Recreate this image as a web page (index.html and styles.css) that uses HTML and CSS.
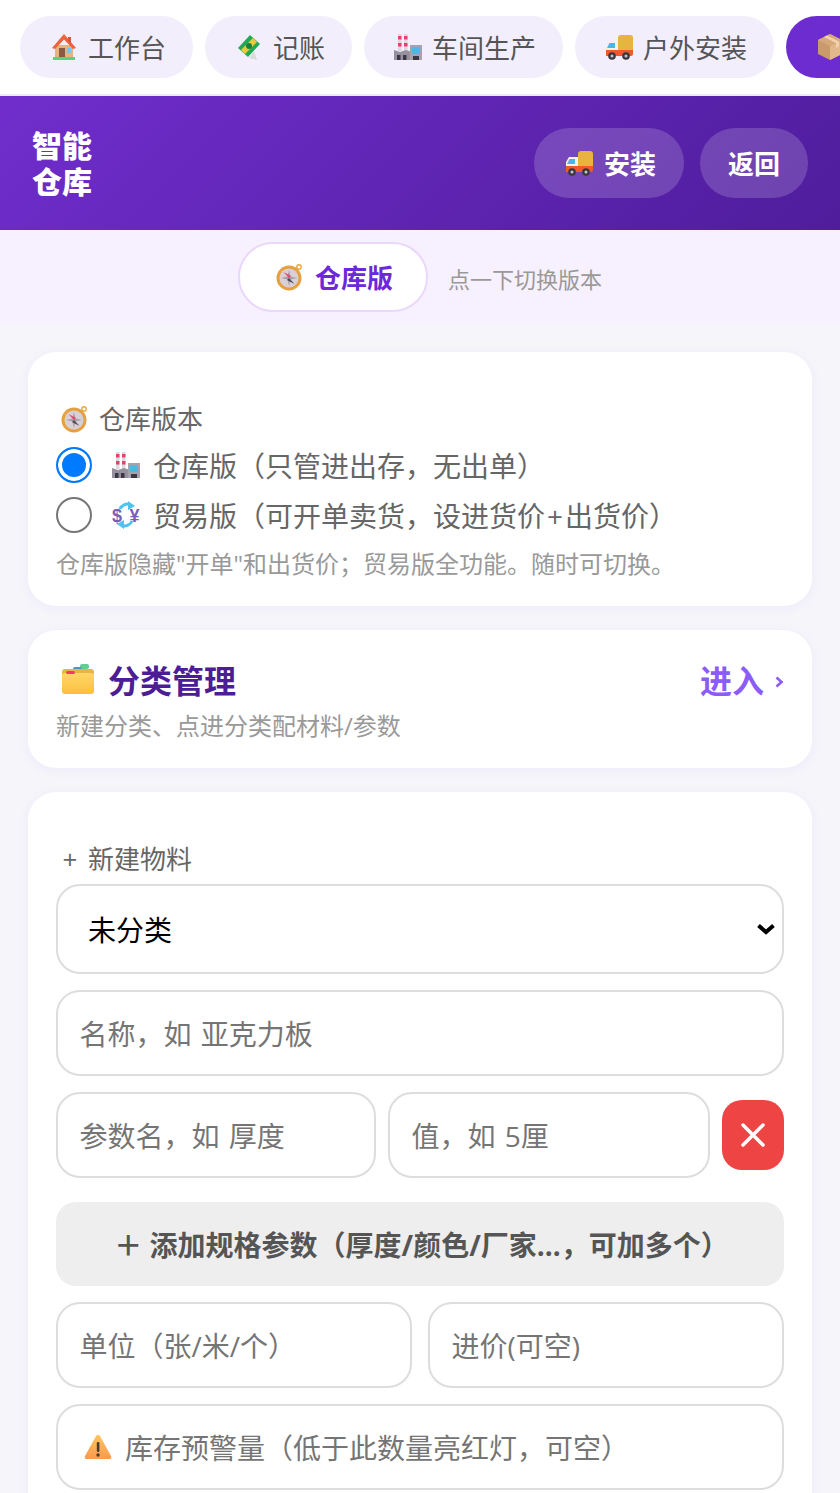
FILE: index.html
```html
<!DOCTYPE html>
<html lang="zh-CN">
<head>
    <meta charset="UTF-8">
    <meta name="viewport" content="width=device-width, initial-scale=1.0">
    <title>智能仓库</title>
    <link rel="stylesheet" href="styles.css">
</head>
<body>
<svg class="defs" width="0" height="0">
    <defs>
        <linearGradient id="g-folder" x1="0" y1="0" x2="0" y2="1">
            <stop offset="0" stop-color="#ffd766"/>
            <stop offset="1" stop-color="#fbbf3f"/>
        </linearGradient>
        <linearGradient id="g-warn" x1="0" y1="0" x2="0" y2="1">
            <stop offset="0" stop-color="#ffc55e"/>
            <stop offset="1" stop-color="#f99a4e"/>
        </linearGradient>
    </defs>
    <symbol id="i-house" viewBox="0 0 28 28">
        <rect x="5" y="12" width="18" height="13" fill="#e8b27e"/>
        <path d="M14 1 L2 15 L5 16 L14 6.500 L23 16 L26 15 Z" fill="#f0623c"/>
        <path d="M18 4h3v7l-3-3z" fill="#d9563a"/>
        <rect x="9" y="15" width="6" height="10" fill="#8a5a44"/>
        <rect x="17" y="15" width="4" height="5" fill="#7fc4e8"/>
        <rect x="3" y="24" width="22" height="3" fill="#5ed07f"/>
    </symbol>
    <symbol id="i-money" viewBox="0 0 28 28">
        <path d="M14 25l8 2-3-9z" fill="#d8dcd8"/>
        <path d="M15 2 L25 11 L13 24 L3 15 Z" fill="#22a857"/>
        <path d="M18 5 L22 9 L10 21 L6 17 Z" fill="#f0c93a"/>
        <circle cx="14" cy="13" r="3" fill="#15803d"/>
    </symbol>
    <symbol id="i-factory" viewBox="0 0 28 28">
        <path d="M4 1h3.500v17H4zM10 1h3.500v17H10z" fill="#dcd8e0"/>
        <path d="M4 3h3.500v3.500H4zM10 3h3.500v3.500H10zM4 10h3.500v3.500H4zM10 10h3.500v3.500H10z" fill="#e83f6f"/>
        <path d="M0 27V17l6 2 6-2 6 2v8z" fill="#96919e"/>
        <rect x="16" y="12" width="12" height="15" fill="#a6a3ad"/>
        <path d="M18 14h8v7h-8z" fill="#4fb7e6"/>
        <path d="M3 22h3.500v5H3zM9 22h3.500v5H9zM19 23h6v4h-6z" fill="#3b3744"/>
    </symbol>
    <symbol id="i-truck" viewBox="0 0 28 28">
        <path d="M13 5a3 3 0 0 1 3-3h9a3 3 0 0 1 3 3v15H13z" fill="#e8b33e"/>
        <path d="M4 8h9v11H1v-6z" fill="#f4f1ec"/>
        <path d="M4.500 10H10v5H2z" fill="#45b7e8"/>
        <path d="M1 17h27v4a2 2 0 0 1-2 2H1z" fill="#f0582f"/>
        <circle cx="7" cy="23" r="3.800" fill="#3a3540"/><circle cx="7" cy="23" r="1.500" fill="#c8c6cc"/>
        <circle cx="21" cy="23" r="3.800" fill="#3a3540"/><circle cx="21" cy="23" r="1.500" fill="#c8c6cc"/>
    </symbol>
    <symbol id="i-box" viewBox="0 0 28 28">
        <path d="M14 1 L26 7 V21 L14 27 L2 21 V7 Z" fill="#c99a6b"/>
        <path d="M14 13 L26 7 V21 L14 27 Z" fill="#e2b88a"/>
        <path d="M14 1 L26 7 L14 13 L2 7 Z" fill="#d7a878"/>
        <path d="M8 4 L20 10 V15 L23 13.500 V8.500 L11 2.500 Z" fill="#f0d3ae"/>
    </symbol>
    <symbol id="i-compass" viewBox="0 0 28 28">
        <circle cx="23" cy="4" r="2.200" fill="none" stroke="#e7a93c" stroke-width="1.400"/>
        <circle cx="13" cy="15" r="12.500" fill="#e6a03f"/>
        <circle cx="13" cy="15" r="9.500" fill="#d9d0d6"/>
        <path d="M13 7 L14.500 13.500 L21 15 L14.500 16.500 L13 23 L11.500 16.500 L5 15 L11.500 13.500 Z" fill="#a8a0a8"/>
        <path d="M13 15 L7.500 9 L15 13z" fill="#e8436e"/>
        <path d="M13 15 L18.500 21 L11 17z" fill="#4d4852"/>
    </symbol>
    <symbol id="i-folder" viewBox="0 0 34 30">
        <rect x="19" y="0" width="9" height="5" rx="2" fill="#5fd08c"/>
        <rect x="12" y="3" width="9" height="5" rx="2" fill="#4f94c4"/>
        <rect x="1" y="5" width="32" height="24" rx="3" fill="#e5b645"/>
        <rect x="1" y="9" width="32" height="21" rx="3" fill="url(#g-folder)"/>
        <rect x="5" y="7" width="9" height="3" rx="1.500" fill="#f0405f"/>
    </symbol>
    <symbol id="i-warn" viewBox="0 0 28 26">
        <path d="M14 1 a2 2 0 0 1 2 1 L27 22 a2 2 0 0 1-2 3 H3 a2 2 0 0 1-2-3 L12 2 a2 2 0 0 1 2-1z" fill="url(#g-warn)"/>
        <rect x="12.800" y="8" width="2.600" height="10" rx="1.200" fill="#4a3b35"/>
        <circle cx="14" cy="21" r="1.700" fill="#4a3b35"/>
    </symbol>
</svg>

<nav class="topnav">
    <a class="tab"><svg class="emoji"><use href="#i-house"/></svg>工作台</a>
    <a class="tab"><svg class="emoji"><use href="#i-money"/></svg>记账</a>
    <a class="tab"><svg class="emoji"><use href="#i-factory"/></svg>车间生产</a>
    <a class="tab"><svg class="emoji"><use href="#i-truck"/></svg>户外安装</a>
    <a class="tab active"><svg class="emoji"><use href="#i-box"/></svg>智能仓库</a>
</nav>

<header class="header">
    <h1 class="title">智能<br>仓库</h1>
    <div class="header-btns">
        <button class="head-btn"><svg class="emoji"><use href="#i-truck"/></svg>安装</button>
        <button class="head-btn">返回</button>
    </div>
</header>

<div class="version-bar">
    <button class="version-pill"><svg class="emoji"><use href="#i-compass"/></svg>仓库版</button>
    <span class="version-hint">点一下切换版本</span>
</div>

<main class="content">
    <section class="card version-card">
        <div class="card-label"><svg class="emoji"><use href="#i-compass"/></svg>仓库版本</div>
        <label class="radio-row">
            <input type="radio" name="ver" checked>
            <svg class="emoji"><use href="#i-factory"/></svg>
            <span>仓库版（只管进出存，无出单）</span>
        </label>
        <label class="radio-row">
            <input type="radio" name="ver">
            <svg class="emoji" viewBox="0 0 28 28">
                <path d="M8 8 A8 8 0 0 1 18 3.500" fill="none" stroke="#4fc3f0" stroke-width="3"/>
                <path d="M16 0 L23 5 L16 9z" fill="#4fc3f0"/>
                <path d="M20 20 A8 8 0 0 1 10 24.500" fill="none" stroke="#4fc3f0" stroke-width="3"/>
                <path d="M12 28 L5 23 L12 19z" fill="#4fc3f0"/>
                <text x="0" y="20.500" class="cur">$</text>
                <text x="17.500" y="20.500" class="cur">¥</text>
            </svg>
            <span>贸易版（可开单卖货，设进货价<span class="wide">+</span>出货价）</span>
        </label>
        <p class="note">仓库版隐藏"开单"和出货价；贸易版全功能。随时可切换。</p>
    </section>

    <section class="card cat-card">
        <div class="cat-top">
            <h2 class="cat-title"><svg class="emoji folder"><use href="#i-folder"/></svg>分类管理</h2>
            <span class="cat-link">进入
                <svg class="cat-arrow" width="9" height="12" viewBox="0 0 9 12"><path d="M1.500 1.500 L6.500 6 L1.500 10.500" fill="none" stroke="#8b5cf6" stroke-width="2.600"/></svg>
            </span>
        </div>
        <p class="note">新建分类、点进分类配材料/参数</p>
    </section>

    <section class="card form-card">
        <div class="card-label"><span class="plus">+</span>新建物料</div>
        <select class="field select">
            <option>未分类</option>
        </select>
        <input class="field" placeholder="名称，如 亚克力板">
        <div class="param-row">
            <input class="field param-name" placeholder="参数名，如 厚度">
            <input class="field param-val" placeholder="值，如 5厘">
            <button class="del-btn" aria-label="删除">
                <svg width="24" height="24" viewBox="0 0 24 24"><path d="M2 2 L22 22 M22 2 L2 22" stroke="#fff" stroke-width="3.500" stroke-linecap="round"/></svg>
            </button>
        </div>
        <button class="add-btn">＋ 添加规格参数（厚度/颜色/厂家…，可加多个）</button>
        <div class="two-col">
            <input class="field" placeholder="单位（张/米/个）">
            <input class="field" placeholder="进价(可空)">
        </div>
        <div class="field warn-field">
            <svg class="emoji"><use href="#i-warn"/></svg>
            <span>库存预警量（低于此数量亮红灯，可空）</span>
        </div>
    </section>
</main>
</body>
</html>
```

FILE: styles.css
```css
* {
    margin: 0;
    padding: 0;
    box-sizing: border-box;
}

html, body {
    height: 1493px;
    overflow: hidden;
}

body {
    background: #f5f5fa;
    font-family: "Open Sans", "Noto Sans CJK SC", sans-serif;
    color: #555;
}

.defs {
    position: absolute;
}

.cur {
    font: bold 18px "Liberation Sans", sans-serif;
    fill: #7a5cb8;
}

.emoji {
    width: 28px;
    height: 28px;
    flex: none;
}

/* top tabs */
.topnav {
    display: flex;
    gap: 12px;
    height: 96px;
    padding: 16px 20px 0;
    background: #fff;
    border-bottom: 2px solid #eeeaf5;
    overflow: hidden;
}

.tab {
    display: flex;
    align-items: center;
    gap: 10px;
    flex: none;
    height: 62px;
    padding: 0 27px 0 30px;
    border-radius: 31px;
    background: #f3eefc;
    font-size: 26px;
    color: #555;
}

.tab.active {
    background: #6d2cd0;
    color: #fff;
}

/* purple header */
.header {
    display: flex;
    align-items: center;
    justify-content: space-between;
    height: 134px;
    padding: 0 32px;
    background: linear-gradient(135deg, #702dcc, #4f1d9c);
}

.title {
    margin-top: 2px;
    font-size: 30px;
    line-height: 36px;
    font-weight: 900;
    color: #fff;
}

.header-btns {
    display: flex;
    gap: 16px;
}

.head-btn {
    display: flex;
    align-items: center;
    gap: 11px;
    height: 70px;
    padding: 0 28px;
    border: 0;
    border-radius: 35px;
    background: rgba(255, 255, 255, .17);
    color: #fff;
    font: 700 26px "Open Sans", "Noto Sans CJK SC", sans-serif;
}

.head-btn .emoji {
    margin-left: 3px;
}

/* version switch */
.version-bar {
    display: flex;
    align-items: center;
    justify-content: center;
    gap: 20px;
    height: 94px;
    background: #f7f0fe;
}

.version-pill {
    display: flex;
    align-items: center;
    gap: 11px;
    height: 70px;
    padding: 0 33px 0 36px;
    border: 2px solid #ead8fb;
    border-radius: 35px;
    background: #fff;
    color: #6d28d9;
    font: 700 26px "Open Sans", "Noto Sans CJK SC", sans-serif;
}

.version-hint {
    font-size: 22px;
    color: #999;
    padding-top: 2px;
}

/* cards */
.content {
    display: flex;
    flex-direction: column;
    gap: 24px;
    padding: 28px 28px 0;
}

.card {
    padding: 28px;
    border-radius: 28px;
    background: #fff;
    box-shadow: 0 2px 12px rgba(109, 40, 217, .05);
}

.version-card {
    height: 254px;
}

.card-label {
    display: flex;
    align-items: center;
    gap: 10px;
    height: 40px;
    margin: 19px 0 1px 5px;
    font-size: 26px;
    line-height: 40px;
    color: #666;
}

.radio-row {
    display: flex;
    align-items: center;
    height: 50px;
    font-size: 28px;
    color: #666;
}

.radio-row input {
    appearance: none;
    width: 36px;
    height: 36px;
    margin-right: 20px;
    flex: none;
    border: 2.5px solid #767676;
    border-radius: 50%;
    background: #fff;
}

.radio-row input:checked {
    border-color: #007aff;
    background: #007aff;
    box-shadow: inset 0 0 0 4px #fff;
}

.radio-row .emoji {
    margin-right: 13px;
}

.wide {
    margin: 0 2px;
}

.note {
    font-size: 24px;
    line-height: 36px;
    color: #999;
}

.version-card .note {
    margin-top: 6px;
}

.cat-card {
    height: 138px;
    padding-top: 27px;
}

.cat-card .note {
    margin-top: 7px;
}

.cat-top {
    display: flex;
    align-items: center;
    justify-content: space-between;
    height: 44px;
}

.cat-title {
    display: flex;
    align-items: center;
    gap: 13px;
    font-size: 32px;
    font-weight: 700;
    color: #4c1d95;
}

.folder {
    width: 34px;
    height: 30px;
    margin-left: 5px;
}

.cat-link {
    display: flex;
    align-items: center;
    gap: 11px;
    font-size: 32px;
    font-weight: 700;
    color: #8b5cf6;
}

.cat-arrow {
    margin-top: 6px;
}

/* new item form */
.form-card {
    padding-bottom: 40px;
}

.plus {
    width: 20px;
    margin-left: -1px;
    text-align: center;
    font-size: 26px;
}

.form-card .card-label {
    gap: 8px;
    height: 44px;
    margin-top: 17px;
    margin-bottom: 3px;
}

.field {
    display: block;
    width: 100%;
    height: 86px;
    padding: 2px 22px 0 21.5px;
    border: 2px solid #ddd;
    border-radius: 24px;
    background: #fff;
    font: 28px "Open Sans", "Noto Sans CJK SC", sans-serif;
    word-spacing: 2px;
    color: #000;
}

.field::placeholder {
    color: #757575;
}

.select {
    appearance: none;
    height: 90px;
    padding-left: 30px;
    margin-bottom: 16px;
    background: #fff url("data:image/svg+xml,%3Csvg xmlns='http://www.w3.org/2000/svg' width='20' height='14' viewBox='0 0 20 14'%3E%3Cpath d='M3.500 3.500 L11 10 L18.500 3.500' fill='none' stroke='%23000' stroke-width='4'/%3E%3C/svg%3E") no-repeat right 7px center;
}

.param-row {
    display: flex;
    align-items: center;
    gap: 12px;
    margin-top: 16px;
}

.param-name {
    width: 320px;
}

.param-val {
    width: 322px;
}

.del-btn {
    display: flex;
    align-items: center;
    justify-content: center;
    flex: none;
    width: 62px;
    height: 70px;
    border: 0;
    border-radius: 20px;
    background: #ef4444;
}

.add-btn {
    display: block;
    width: 100%;
    height: 84px;
    margin-top: 24px;
    padding-left: 3px;
    border: 0;
    border-radius: 20px;
    background: #eee;
    color: #555;
    font: 700 28px "Open Sans", "Noto Sans CJK SC", sans-serif;
}

.two-col {
    display: grid;
    grid-template-columns: 1fr 1fr;
    gap: 16px;
    margin-top: 16px;
}

.warn-field {
    display: flex;
    align-items: center;
    gap: 13px;
    margin-top: 16px;
    padding: 0 22px 0 26px;
    color: #757575;
}
```
